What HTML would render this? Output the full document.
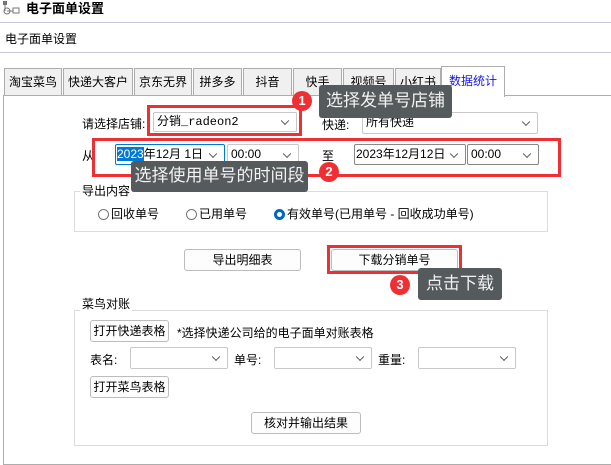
<!DOCTYPE html>
<html><head><meta charset="utf-8"><style>
body{margin:0;width:611px;height:457px;overflow:hidden;background:#fff;font-family:"Liberation Sans","Noto Sans CJK SC",sans-serif;font-size:12px;color:#000;position:relative}
.a{position:absolute;white-space:nowrap}
.tab{position:absolute;top:68px;height:27px;border:1px solid #adadad;border-bottom:none;background:#f0f0f0;text-align:center;line-height:26px;font-size:12px;box-sizing:border-box}
.sel{position:absolute;border:1px solid #c8c8c8;background:#fff;border-radius:2px;box-sizing:border-box;line-height:18px;padding-left:3px}
.sel:after{content:"";position:absolute;right:8px;top:50%;width:5px;height:5px;border-right:1px solid #555;border-bottom:1px solid #555;transform:translateY(-70%) rotate(45deg)}
.btn{position:absolute;border:1px solid #bcbcbc;background:#fdfdfd;border-radius:3px;box-sizing:border-box;text-align:center}
.red{position:absolute;border:3px solid #ee3035;box-sizing:border-box}
.tip{position:absolute;background:#555a5c;color:#f2f2f2;font-size:17px;border-radius:3px;text-align:center}
.num{position:absolute;width:20px;height:20px;border-radius:50%;background:#ee3035;color:#fff;font-size:13px;font-weight:bold;text-align:center;line-height:20px}
.grp{position:absolute;border:1px solid #dcdcdc}
.rad{display:inline-block;width:11px;height:11px;border:1px solid #777;border-radius:50%;vertical-align:-2px;margin-right:2px;box-sizing:border-box}
</style></head><body>
<svg class="a" style="left:1px;top:0" width="20" height="18"><rect x="2" y="1" width="4" height="4" fill="#777"/><rect x="12" y="8" width="6" height="5" fill="none" stroke="#777"/><circle cx="6" cy="11" r="3" fill="none" stroke="#777"/><path d="M4 5v6M6 11h6" stroke="#777"/></svg>
<div class="a" style="left:26px;top:-2px;font-size:13px;font-weight:bold">电子面单设置</div>
<div class="a" style="left:0;top:22px;width:611px;height:1px;background:#c7c7dd"></div>
<div class="a" style="left:5px;top:30px">电子面单设置</div>
<div class="a" style="left:0;top:52px;width:611px;height:1px;background:#c7c7dd"></div>
<div class="a" style="left:3px;top:95px;width:620px;height:370px;border:1px solid #adadad;box-sizing:border-box"></div>
<div class="tab" style="left:4px;width:58px">淘宝菜鸟</div>
<div class="tab" style="left:63px;width:70px">快递大客户</div>
<div class="tab" style="left:134px;width:58px">京东无界</div>
<div class="tab" style="left:193px;width:49px">拼多多</div>
<div class="tab" style="left:243px;width:49px">抖音</div>
<div class="tab" style="left:293px;width:49px">快手</div>
<div class="tab" style="left:343px;width:51px">视频号</div>
<div class="tab" style="left:395px;width:46px">小红书</div>
<div class="tab" style="left:441px;width:64px;top:66px;height:31px;background:#fff;color:#1515ee;line-height:28px">数据统计</div>

<div class="a" style="left:82px;top:115px">请选择店铺:</div>
<div class="sel" style="left:153px;top:112px;width:144px;height:20px;font-family:'Liberation Mono','Noto Sans CJK SC',monospace">分销_radeon2</div>
<div class="red" style="left:147px;top:105px;width:155px;height:31px"></div>
<div class="a" style="left:322px;top:116px">快递:</div>
<div class="sel" style="left:362px;top:112px;width:176px;height:22px">所有快递</div>

<div class="a" style="left:82px;top:147px">从</div>
<div class="sel" style="left:115px;top:144px;width:110px;height:21px;border-color:#0078d7;padding-left:1px"><span style="background:#0078d7;color:#fff">2023</span>年12月 1日</div>
<div class="sel" style="left:227px;top:144px;width:72px;height:21px">00:00</div>
<div class="a" style="left:322px;top:147px">至</div>
<div class="sel" style="left:354px;top:144px;width:112px;height:21px;border-color:#888;padding-left:1px">2023年12月12日</div>
<div class="sel" style="left:467px;top:144px;width:72px;height:21px;border-color:#888">00:00</div>
<div class="red" style="left:92px;top:138px;width:469px;height:39px"></div>

<div class="grp" style="left:74px;top:191px;width:472px;height:39px"></div>
<div class="a" style="left:80px;top:182px;background:#fff;padding:0 2px">导出内容</div>
<div class="a" style="left:98px;top:205px"><span class="rad"></span>回收单号</div>
<div class="a" style="left:186px;top:205px"><span class="rad"></span>已用单号</div>
<div class="a" style="left:274px;top:205px"><span class="rad" style="border:3px solid #0067c0"></span>有效单号(已用单号 - 回收成功单号)</div>

<div class="tip" style="left:131px;top:161px;width:177px;height:31px;line-height:30px">选择使用单号的时间段</div>
<div class="num" style="left:319px;top:162px">2</div>
<div class="tip" style="left:319px;top:85px;width:133px;height:33px;line-height:32px">选择发单号店铺</div>
<div class="num" style="left:292px;top:91px">1</div>

<div class="btn" style="left:184px;top:249px;width:117px;height:22px;line-height:20px">导出明细表</div>
<div class="btn" style="left:331px;top:249px;width:127px;height:22px;line-height:20px">下载分销单号</div>
<div class="red" style="left:327px;top:245px;width:135px;height:29px"></div>
<div class="num" style="left:390px;top:275px">3</div>
<div class="tip" style="left:418px;top:268px;width:84px;height:32px;line-height:32px">点击下载</div>

<div class="grp" style="left:74px;top:310px;width:472px;height:134px"></div>
<div class="a" style="left:80px;top:295px;background:#fff;padding:0 2px">菜鸟对账</div>
<div class="btn" style="left:90px;top:320px;width:79px;height:22px;line-height:20px">打开快递表格</div>
<div class="a" style="left:177px;top:324px">*选择快递公司给的电子面单对账表格</div>
<div class="a" style="left:90px;top:351px">表名:</div>
<div class="sel" style="left:130px;top:347px;width:98px;height:22px"></div>
<div class="a" style="left:234px;top:351px">单号:</div>
<div class="sel" style="left:274px;top:347px;width:98px;height:22px"></div>
<div class="a" style="left:378px;top:351px">重量:</div>
<div class="sel" style="left:418px;top:347px;width:98px;height:22px"></div>
<div class="btn" style="left:90px;top:376px;width:79px;height:22px;line-height:20px">打开菜鸟表格</div>
<div class="btn" style="left:251px;top:412px;width:110px;height:22px;line-height:20px">核对并输出结果</div>
</body></html>
